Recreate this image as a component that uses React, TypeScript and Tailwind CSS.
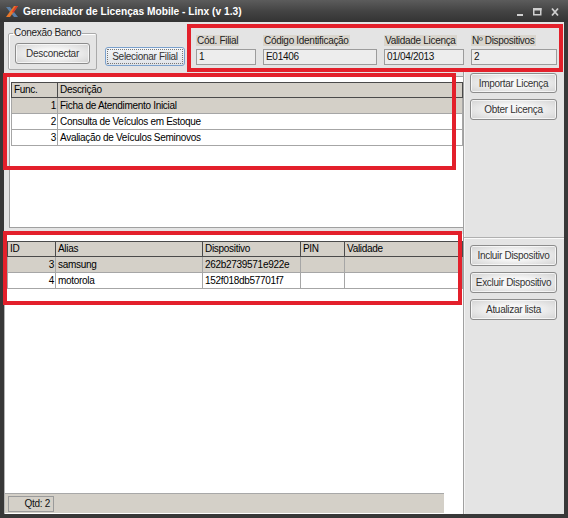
import React from "react";

const btn =
  "flex items-center justify-center rounded-[3px] border border-[#8c8c8c] bg-[radial-gradient(ellipse_at_center,#f6f6f6_35%,#d2d2d2_100%)] text-[#333] shadow-[inset_0_0_0_1px_rgba(255,255,255,0.7)]";

function Field({ label, value, w }: { label: string; value: string; w: string }) {
  return (
    <div className={`flex flex-col ${w}`}>
      <div className="h-[12px] leading-[12px]">
        <span className="bg-[#d9d5cd] px-[1px] text-[#222]">{label}</span>
      </div>
      <div className="mt-[2px] h-[16px] border border-[#9c9c9c] bg-[#ededed] pl-[2px] leading-[14px] text-[#111]">
        {value}
      </div>
    </div>
  );
}

type Col = { title: string; w: string; right?: boolean };

function Grid({ cols, rows, rowH }: { cols: Col[]; rows: { cells: string[]; sel?: boolean }[]; rowH: string }) {
  return (
    <div className="flex flex-col">
      <div className="flex h-[16px] border border-[#4a4a4a] bg-[#d4d0c8]">
        {cols.map((c, i) => (
          <div
            key={i}
            className={`${c.w} ${i < cols.length - 1 ? "border-r border-[#4a4a4a]" : ""} pl-[2px] leading-[14px] text-black`}
          >
            {c.title}
          </div>
        ))}
      </div>
      {rows.map((r, ri) => (
        <div
          key={ri}
          className={`flex ${rowH} border-x border-b border-[#a6a6a6] ${r.sel ? "bg-[#d4d0c8]" : "bg-white"}`}
        >
          {cols.map((c, i) => (
            <div
              key={i}
              className={`${c.w} ${i < cols.length - 1 ? "border-r border-[#a6a6a6]" : ""} ${
                c.right ? "pr-[1px] text-right" : "pl-[2px]"
              } flex items-center ${c.right ? "justify-end" : ""} text-black`}
            >
              {r.cells[i]}
            </div>
          ))}
        </div>
      ))}
    </div>
  );
}

export default function App() {
  return (
    <div className="relative flex h-[518px] w-[568px] flex-col bg-[#383838] font-['Liberation_Sans',Arial,sans-serif] text-[10px] tracking-[-0.3px]">
      {/* Title bar */}
      <div className="flex h-[22px] items-center bg-linear-to-b from-[#5c5c5c] via-[#444444] to-[#333333] pl-[5px] pr-[9px] pt-[1px]">
        <svg width="14" height="14" viewBox="0 0 14 14">
          <path d="M1 2 L5 2 L13 12 L9 12 Z" fill="#5b7fa6" />
          <path d="M13 1 L9 1 L1 12 L5 12 Z" fill="#e8772a" />
          <path d="M13 1 L11 1 L7 6.5 L8.3 8 Z" fill="#d93b2b" />
        </svg>
        <span className="ml-[4px] text-[10.2px] font-bold tracking-normal text-white">
          Gerenciador de Licenças Mobile - Linx (v 1.3)
        </span>
        <div className="ml-auto flex items-center gap-[9px]">
          <svg width="7" height="10" viewBox="0 0 7 10">
            <rect x="0" y="7" width="6" height="2" fill="#cfcfcf" />
          </svg>
          <svg width="9" height="10" viewBox="0 0 9 10">
            <rect x="0.75" y="1.75" width="7" height="6" fill="none" stroke="#cfcfcf" strokeWidth="1.5" />
            <rect x="0" y="1" width="8.5" height="2.5" fill="#cfcfcf" />
          </svg>
          <svg width="8" height="10" viewBox="0 0 8 10">
            <path d="M1 1.5 L7 8.5 M7 1.5 L1 8.5" stroke="#cfcfcf" strokeWidth="1.8" />
          </svg>
        </div>
      </div>

      {/* Body */}
      <div className="mx-[4px] mb-[4px] flex flex-1 flex-col bg-[#e4e4e4]">
        {/* Top panel */}
        <div className="flex h-[50px] items-start">
          <fieldset className="ml-[4px] mt-[6px] h-[42px] w-[88px] rounded-[2px] border border-[#aaaaaa] px-[6px] shadow-[inset_1px_1px_0_#fff]">
            <legend className="ml-[-2px] px-[1px] leading-[10px] text-[#222]">Conexão Banco</legend>
            <div className={`${btn} mt-[5px] h-[21px] w-[75px] ml-[0px]`}>Desconectar</div>
          </fieldset>
          <div className="ml-[8px] mt-[25px] flex h-[19px] w-[80px] items-center justify-center rounded-[3px] border border-[#7aa0cc] bg-linear-to-b from-[#f4f6f8] to-[#dfe3e8] p-[1px]">
            <div className="flex h-full w-full items-center justify-center border border-dotted border-[#777] text-[#333]">
              Selecionar Filial
            </div>
          </div>
          <div className="ml-[11px] mt-[13px] flex gap-[7px]">
            <Field label="Cód. Filial" value="1" w="w-[60px]" />
            <Field label="Código Identificação" value="E01406" w="w-[114px]" />
            <Field label="Validade Licença" value="01/04/2013" w="w-[80px]" />
            <Field label="Nº Dispositivos" value="2" w="w-[86px]" />
          </div>
        </div>

        {/* Main row */}
        <div className="flex flex-1">
          <div className="flex w-[459px] flex-col">
            <div className="ml-[5px] mt-[4px] h-[152px] border-y border-l border-[#a0a0a0] bg-white pl-[1px] pt-[5px]">
              <Grid
                rowH="h-[16px]"
                cols={[
                  { title: "Func.", w: "w-[46px]", right: true },
                  { title: "Descrição", w: "w-[384px]" },
                ]}
                rows={[
                  { cells: ["1", "Ficha de Atendimento Inicial"], sel: true },
                  { cells: ["2", "Consulta de Veículos em Estoque"] },
                  { cells: ["3", "Avaliação de Veículos Seminovos"] },
                ]}
              />
            </div>
            <div className="mt-[6px] flex flex-1 flex-col border-l border-[#b4b4b4] bg-white">
              <div className="pl-[2px] pt-[7px]">
                <Grid
                  rowH="h-[16px]"
                  cols={[
                    { title: "ID", w: "w-[48px]", right: true },
                    { title: "Alias", w: "w-[147px]" },
                    { title: "Dispositivo", w: "w-[98px]" },
                    { title: "PIN", w: "w-[44px]" },
                    { title: "Validade", w: "w-[97px]" },
                  ]}
                  rows={[
                    { cells: ["3", "samsung", "262b2739571e922e", "", ""], sel: true },
                    { cells: ["4", "motorola", "152f018db57701f7", "", ""] },
                  ]}
                />
              </div>
              <div className="mt-auto mb-[1px] flex h-[20px] w-[439px] items-center border-t border-[#a8a8a8] bg-[#d4d0c8] pl-[3px]">
                <div className="flex h-[16px] w-[46px] items-center justify-end border border-[#9a9a9a] pr-[3px] text-[#111]">
                  Qtd: 2
                </div>
              </div>
            </div>
          </div>

          {/* Right panel */}
          <div className="flex flex-1 flex-col border-l border-[#a0a0a0] bg-[#e4e4e4] shadow-[inset_1px_0_0_#f4f4f4]">
            <div className="flex h-[165px] flex-col gap-[6px] pl-[6px] pt-[1px]">
              <div className={`${btn} h-[20px] w-[87px]`}>Importar Licença</div>
              <div className={`${btn} h-[21px] w-[87px]`}>Obter Licença</div>
            </div>
            <div className="flex flex-1 flex-col gap-[6px] border-t border-[#b0b0b0] pl-[6px] pt-[7px] shadow-[inset_0_1px_0_#fafafa]">
              <div className={`${btn} h-[21px] w-[87px]`}>Incluir Dispositivo</div>
              <div className={`${btn} h-[21px] w-[87px]`}>Excluir Dispositivo</div>
              <div className={`${btn} h-[21px] w-[87px]`}>Atualizar lista</div>
            </div>
          </div>
        </div>
      </div>

      {/* Red annotation overlays */}
      <div className="pointer-events-none absolute left-[187px] top-[24px] h-[48px] w-[376px] border-4 border-[#e3202b]" />
      <div className="pointer-events-none absolute left-[3px] top-[73px] h-[97px] w-[453px] border-4 border-[#e3202b]" />
      <div className="pointer-events-none absolute left-[3px] top-[231px] h-[74px] w-[459px] border-4 border-[#e3202b]" />
    </div>
  );
}
